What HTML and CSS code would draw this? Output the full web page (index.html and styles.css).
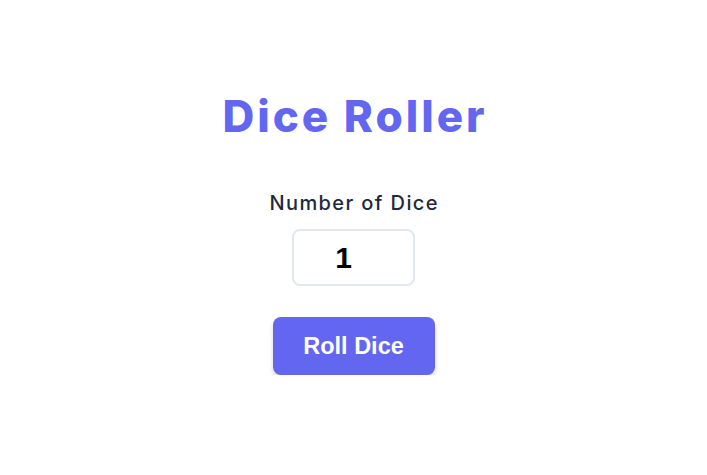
FILE: index.html
```html
<!DOCTYPE html>
<html lang="en">
<head>
<meta charset="utf-8">
<title>Dice Roller</title>
<link rel="stylesheet" href="styles.css">
</head>
<body>
<main class="app">
  <h1 class="title">Dice Roller</h1>
  <div class="field">
    <label class="label" for="count">Number of Dice</label>
    <input class="count" id="count" type="number" value="1" min="1">
  </div>
  <button class="roll" type="button">Roll Dice</button>
</main>
</body>
</html>
```

FILE: styles.css
```css
html, body {
  margin: 0;
  padding: 0;
  background: #ffffff;
}

body {
  font-family: "Inter", "Open Sans", sans-serif;
  color: #1e293b;
}

.app {
  display: flex;
  flex-direction: column;
  align-items: center;
  padding-top: 88px;
}

.title {
  margin: 0;
  padding-left: 3px;
  font-size: 44px;
  line-height: 56px;
  font-weight: 800;
  color: #6366f1;
  letter-spacing: 3px;
}

.field {
  display: flex;
  flex-direction: column;
  align-items: center;
  margin-top: 45px;
  gap: 12px;
}

.label {
  padding-left: 1.4px;
  font-size: 20px;
  line-height: 28px;
  font-weight: 500;
  color: #1e293b;
  letter-spacing: 1.4px;
}

.count {
  box-sizing: border-box;
  width: 123px;
  height: 57px;
  border: 2px solid #e2e8f0;
  border-radius: 8px;
  font-family: "Liberation Sans", Arial, sans-serif;
  font-size: 30px;
  font-weight: 700;
  color: #000;
  text-align: center;
  padding: 0 20px 0 0;
  outline: none;
  -moz-appearance: textfield;
}

.count::-webkit-outer-spin-button,
.count::-webkit-inner-spin-button {
  -webkit-appearance: none;
  margin: 0;
}

.roll {
  margin-top: 31px;
  box-sizing: border-box;
  width: 162px;
  height: 58px;
  border: none;
  border-radius: 8px;
  background: #6366f1;
  color: #ffffff;
  font-family: "Liberation Sans", Arial, sans-serif;
  font-size: 23.5px;
  font-weight: 700;
  box-shadow: 0 4px 6px rgba(0, 0, 0, 0.1), 0 2px 4px rgba(0, 0, 0, 0.06);
  cursor: pointer;
}
```
